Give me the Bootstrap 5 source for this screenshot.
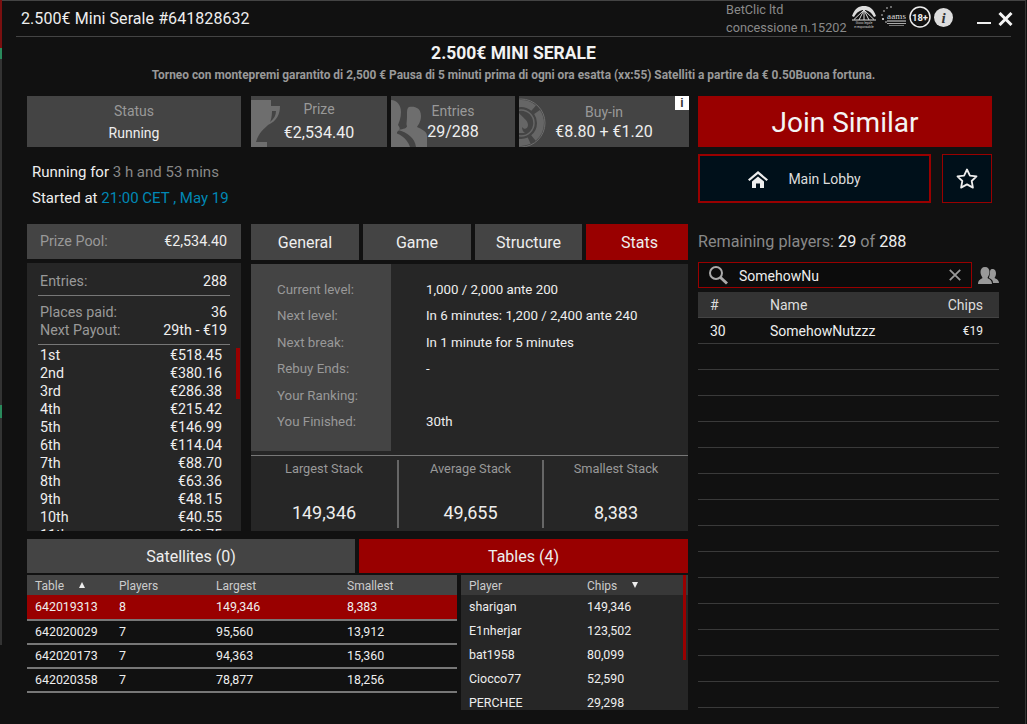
<!DOCTYPE html>
<html lang="en">
<head>
  <meta charset="UTF-8">
  <meta name="viewport" content="width=device-width, initial-scale=1">
  <title>2.500€ Mini Serale</title>
  <link href="https://cdn.jsdelivr.net/npm/bootstrap@5.3.0/dist/css/bootstrap.min.css" rel="stylesheet">
  <style>
    html, body { height: 100%; }
    body {
      background: #111;
      color: #eee;
      font-family: Roboto, "Liberation Sans", sans-serif;
      font-size: 14px;
      overflow: hidden;
    }
    .app-window {
      width: 1024px;
      height: 724px;
      border-top: 1px solid #444;
      border-right: 1px solid #333;
      background: #111;
      overflow: hidden;
    }
    .edge-strip {
      width: 2px;
      height: 724px;
      flex: none;
      background: linear-gradient(#7a1010 0 48px, #2a8a5c 48px 59px, #333 59px 405px, #2a8a5c 405px 418px, #333 418px 645px, #111 645px);
    }
    .win-head {
      height: 36px;
      margin: 0 14px 0 14px;
      border-bottom: 1px solid #444;
      padding-left: 5px;
    }
    .win-title { font-size: 16px; line-height: 36px; color: #eee; letter-spacing: .07px; }
    .lic-text { font-size: 12.7px; line-height: 18px; color: #8a8a8a; width: 125px; }
    .lic-logos { margin-left: 0; width: 104px; gap: 3px; padding-bottom: 3px; }
    .win-btns { margin-left: 22px; width: 37px; gap: 7px; margin-right: -3px; }
    .tourney-head { height: 59px; padding-top: 6px; }
    .tourney-name { font-size: 17.5px; font-weight: 700; line-height: 20px; color: #f2f2f2; }
    .tourney-desc { font-size: 11.9px; font-weight: 700; line-height: 16px; margin-top: 4px; color: #999; }
    .main-area { padding-left: 25px; gap: 9px; }
    .left-area { width: 662px; flex: none; }
    .right-area { width: 301px; flex: none; }

    .info-tile {
      height: 51px;
      background: #444;
      position: relative;
      overflow: hidden;
      text-align: center;
      line-height: 20px;
    }
    .info-tile .tile-lab { color: #999; font-size: 14px; }
    .info-tile .tile-val { color: #eee; font-size: 16px; }
    .tile-status { width: 214px; margin-right: 10px; padding-top: 5px; }
    .tile-status .tile-lab { line-height: 20px; }
    .tile-status .tile-val { font-size: 14px; line-height: 24px; }
    .tile-prize { width: 136px; margin-right: 4px; padding-top: 3px; padding-left: 0; }
    .tile-prize .tile-val, .tile-prize .tile-lab { position: relative; }
    .tile-prize .tile-val { line-height: 28px; }
    .tile-entries { width: 124px; margin-right: 4px; padding-top: 5px; }
    .tile-entries .tile-val { line-height: 22px; position: relative; }
    .tile-buyin { width: 170px; padding-top: 6px; }
    .tile-buyin .tile-val { line-height: 20px; position: relative; }
    .tile-art { position: absolute; left: 0; top: 0; }
    .tile-info {
      position: absolute; right: 0; top: 0;
      width: 14px; height: 14px;
      background: #fff; color: #333;
      font: 700 12px/14px "Liberation Sans", sans-serif;
    }
    .run-info { height: 77px; padding: 12px 0 0 5px; line-height: 26px; font-size: 15px; }
    .run-grey { color: #888; }
    .run-blue { color: #0088b5; }

    .pool-col { width: 214px; margin-right: 10px; flex: none; font-size: 14.3px; }
    .pool-head { height: 35px; background: #444; padding: 0 14px 0 13px; color: #eee; }
    .pool-head span:first-child { color: #999; }
    .pool-body {
      height: 268px; margin-top: 4px;
      background: #262626; position: relative; overflow: hidden;
      padding-top: 9px; line-height: 18px;
    }
    .pool-row { padding: 0 14px 0 13px; }
    .pool-row .pool-lab { color: #999; }
    .pool-rule { height: 1px; background: #777; margin: 5px 11px 7px; }
    .pool-list { margin-top: -6px; }
    .pool-list .pool-row { padding-right: 19px; }
    .pool-thumb { position: absolute; left: 209px; top: 85px; width: 4px; height: 51px; background: #900; }

    .detail-col { width: 437px; flex: none; }
    .tab-row { gap: 4px; }
    .tab-btn {
      height: 36px; line-height: 38px; text-align: center;
      background: #444; color: #eee; font-size: 16px;
      padding: 0; border-radius: 0;
    }
    .tab-btn.nav-link:hover, .tab-btn.nav-link:focus { color: #eee; }
    .tab-on { background: #900; }
    .tab-w1 { width: 108px; }
    .tab-w2 { width: 107px; }
    .tab-w3 { width: 102px; padding-left: 5px; }
    .detail-body { height: 267px; margin-top: 4px; background: #262626; }
    .detail-labs { width: 140px; height: 187px; background: #444; padding: 12px 0 0 26px; color: #999; }
    .detail-vals { padding: 12px 0 0 35px; color: #eee; }
    .detail-labs div, .detail-vals div { height: 26.4px; line-height: 27.4px; font-size: 13.3px; white-space: nowrap; }
    .stack-rule { height: 1px; background: #777; margin-top: 4px; }
    .stack-col { height: 68px; margin-top: 4px; padding-top: 1px; text-align: center; border-right: 2px solid #666; }
    .stack-w1 { width: 148px; }
    .stack-w2 { width: 145px; }
    .stack-w3 { width: 144px; border-right: 0; }
    .stack-lab { color: #999; font-size: 12.8px; line-height: 16px; }
    .stack-val { color: #eee; font-size: 18px; line-height: 24px; margin-top: 24px; }

    .lower-tabs { margin-top: 8px; gap: 4px; }
    .lower-tabs .tab-btn { height: 34px; line-height: 36px; padding: 0; }
    .lower-w1 { width: 328px; }
    .lower-w2 { width: 329px; }
    .lower-tables { margin-top: 2px; gap: 4px; }
    .tables-wrap { width: 430px; flex: none; }
    .players-wrap { width: 227px; height: 135px; flex: none; background: #262626; position: relative; overflow: hidden; }
    .players-thumb { position: absolute; right: 2px; top: 0; width: 3px; height: 85px; background: #900; }

    .tbl-dark {
      --bs-table-bg: transparent;
      --bs-table-color: #eee;
      border-collapse: separate;
      border-spacing: 0;
      table-layout: fixed;
      font-size: 12.4px;
      margin: 0;
      color: #eee;
    }
    .tbl-dark th, .tbl-dark td {
      padding: 1px 0 0 8px;
      border: 0;
      font-weight: 400;
      vertical-align: middle;
      color: inherit;
      background: transparent;
      box-shadow: none;
    }
    .tbl-dark th { height: 20px; background: #444; color: #ccc; font-size: 12px; }
    .tbl-tables td { height: 24px; border-bottom: 2px solid #777; }
    .tbl-tables .row-on td { height: 26px; background: #900; background-clip: padding-box; }
    .tbl-players th { background: #383838; }
    .tbl-players td { height: 24px; }
    .sort-up, .sort-down { display: inline-block; width: 0; height: 0; border-left: 3.5px solid transparent; border-right: 3.5px solid transparent; margin-left: 12px; vertical-align: 2px; }
    .sort-up { border-bottom: 6px solid #eee; }
    .sort-down { border-top: 6px solid #eee; }

    .join-btn {
      display: block; width: 294px; height: 51px;
      background: #900; color: #f4f4f4; border: 0; border-radius: 0;
      font-size: 28px; line-height: 53px; padding: 0;
    }
    .join-btn:hover { background: #900; color: #f4f4f4; }
    .lobby-row { margin-top: 7px; gap: 11px; }
    .lobby-btn, .fav-btn {
      height: 49px; background: #00101a; border-radius: 0; padding: 0;
      color: #ddd; font-size: 14px;
    }
    .lobby-btn { width: 233px; border: 2px solid #900; gap: 20px; padding: 1px 20px 0 0; }
    .fav-btn { width: 50px; border: 1px solid #900; }
    .lobby-btn:hover, .fav-btn:hover { background: #00101a; border-color: #900; color: #ddd; }
    .remain-line { margin-top: 27px; line-height: 24px; font-size: 16.2px; color: #888; }
    .remain-line b { font-weight: 400; color: #eee; }
    .search-row { margin-top: 8px; height: 26px; gap: 6px; }
    .search-box { width: 274px; height: 26px; border: 1px solid #900; padding: 0 10px 0 9px; gap: 11px; background: #0c0c0c; }
    .search-input {
      flex: 1; min-width: 0; height: 22px; border: 0; background: transparent; box-shadow: none;
      padding: 1px 0 0; color: #eee; font-size: 14px; border-radius: 0;
    }
    .search-input:focus { background: transparent; box-shadow: none; color: #eee; }
    .tbl-remain { margin-top: 4px; font-size: 14px; --bs-table-color: #eee; }
    .tbl-dark.tbl-remain th { height: 26px; background: #333; color: #ddd; font-size: 14px; border-bottom: 1px solid #444; padding-left: 12px; }
    .tbl-dark.tbl-remain td { height: 26px; border-bottom: 1px solid #3a3a3a; padding-left: 12px; }
    .tbl-dark.tbl-remain .num-col { text-align: right; padding-right: 16px; padding-left: 0; }
    .tbl-dark.tbl-remain td.num-col { font-size: 12px; }
    .tbl-dark.tbl-remain .name-col { padding-left: 0; }
  </style>
</head>

<body>
  <div class="d-flex">
    <div class="edge-strip"></div>
    <div class="app-window">

      <div class="win-head d-flex justify-content-between">
        <div class="win-title">2.500€ Mini Serale #641828632</div>
        <div class="d-flex">
          <div class="lic-text">BetClic ltd<br>concessione n.15202</div>
          <div class="lic-logos d-flex align-items-center">
            <svg width="26" height="24" viewBox="0 0 26 24">
              <path d="M1 11 C4 3 8 1 13 1 C18 1 22 3 25 11 L23 12 C20 7 17 5 13 5 C9 5 6 7 3 12Z" fill="#ddd"/>
              <path d="M3 14.5 L13 5 L23 14.5 M13 5 V15 M8 15 L13 5 L18 15 M1 15 H25" stroke="#ddd" stroke-width="1" fill="none"/>
              <text x="13" y="19" font-size="3" fill="#ccc" text-anchor="middle">Gioco legale</text>
              <text x="13" y="23" font-size="3" fill="#ccc" text-anchor="middle">e responsabile</text>
            </svg>
            <svg width="26" height="24" viewBox="0 0 26 24">
              <g fill="#ddd"><circle cx="11" cy="2" r=".8"/><circle cx="7" cy="3" r=".8"/><circle cx="4" cy="6" r=".8"/><circle cx="2" cy="10" r=".8"/><circle cx="3" cy="14" r="1.1"/><circle cx="6" cy="17" r=".8"/></g>
              <text x="7" y="14" font-size="9" fill="#ddd" font-family="Liberation Serif, serif" textLength="19">aams</text>
              <rect x="7" y="15.5" width="19" height="1" fill="#ddd"/>
              <rect x="7" y="18" width="19" height="1" fill="#aaa"/>
              <rect x="9" y="20" width="15" height="1" fill="#777"/>
            </svg>
            <svg width="22" height="22" viewBox="0 0 22 22">
              <circle cx="11" cy="11" r="10" fill="none" stroke="#eee" stroke-width="1.5"/>
              <text x="11" y="14.5" font-size="9.5" font-weight="700" fill="#eee" text-anchor="middle">18+</text>
            </svg>
            <svg width="19" height="19" viewBox="0 0 19 19">
              <circle cx="9.5" cy="9.5" r="9.5" fill="#ddd"/>
              <text x="9.5" y="15" font-size="15" font-weight="700" font-style="italic" font-family="Liberation Serif, serif" fill="#333" text-anchor="middle">i</text>
            </svg>
          </div>
          <div class="win-btns d-flex align-items-center">
            <svg width="14" height="14" viewBox="0 0 14 14"><rect y="10" width="14" height="2" fill="#eee"/></svg>
            <svg width="15" height="14" viewBox="0 0 15 14"><path d="M1.5 1 L13.5 13 M13.5 1 L1.5 13" stroke="#f4f4f4" stroke-width="3"/></svg>
          </div>
        </div>
      </div>

      <div class="tourney-head text-center">
        <div class="tourney-name">2.500€ MINI SERALE</div>
        <div class="tourney-desc">Torneo con montepremi garantito di 2,500 € Pausa di 5 minuti prima di ogni ora esatta (xx:55) Satelliti a partire da € 0.50Buona fortuna.</div>
      </div>

      <div class="main-area d-flex">
        <div class="left-area">
          <div class="d-flex">
            <div class="info-tile tile-status">
              <div class="tile-lab">Status</div>
              <div class="tile-val">Running</div>
            </div>
            <div class="info-tile tile-prize">
              <svg class="tile-art" width="30" height="51" viewBox="0 0 30 51">
                <path fill-rule="evenodd" fill="#6e6e6e" d="M0 4 H20 V10 H29 C29 18 26 25 17 29 C13 33 8 36 5 46 H16 V51 H0Z M21 15 C21 20 20 24 19 26 C23 23 25 19 25 15Z"/>
              </svg>
              <div class="tile-lab">Prize</div>
              <div class="tile-val">€2,534.40</div>
            </div>
            <div class="info-tile tile-entries">
              <svg class="tile-art" width="38" height="51" viewBox="0 0 38 51">
                <path fill="#6e6e6e" d="M0 4 C6 4 10 9 10 16 C10 22 8 26 7 29 C9 32 10 33 6 36 L6 51 H0Z"/>
                <path fill="#6e6e6e" d="M18 11 C24 10 30 12 30 20 C30 26 27 29 26 31 C30 33 36 35 36 40 V51 H25 C24 42 16 36 7 34 C13 33 16 32 16 30 C15 28 16 26 16 20 C16 15 16 12 18 11Z"/>
                <path fill="#6e6e6e" d="M0 36 C8 37 16 42 19 51 H0Z"/>
              </svg>
              <div class="tile-lab">Entries</div>
              <div class="tile-val">29/288</div>
            </div>
            <div class="info-tile tile-buyin">
              <svg class="tile-art" width="28" height="51" viewBox="0 0 28 51">
                <circle cx="2" cy="27" r="24" fill="none" stroke="#6e6e6e" stroke-width="1"/>
                <circle cx="2" cy="27" r="19.5" fill="none" stroke="#666" stroke-width="7" stroke-dasharray="17 5"/>
                <circle cx="2" cy="27" r="13" fill="#444" stroke="#666" stroke-width="1.5"/>
                <path fill="#666" d="M0 17 C3 21 9 24 9 29 C9 33 5 34 3 31 C3 33 4 36 6 37 H0Z"/>
              </svg>
              <div class="tile-lab">Buy-in</div>
              <div class="tile-val">€8.80 + €1.20</div>
              <div class="tile-info">i</div>
            </div>
          </div>

          <div class="run-info">
            <div>Running for <span class="run-grey">3 h and 53 mins</span></div>
            <div>Started at <span class="run-blue">21:00 CET , May 19</span></div>
          </div>

          <div class="d-flex">
            <div class="pool-col">
              <div class="pool-head d-flex justify-content-between align-items-center"><span>Prize Pool:</span><span>€2,534.40</span></div>
              <div class="pool-body">
                <div class="pool-row d-flex justify-content-between"><span class="pool-lab">Entries:</span><span>288</span></div>
                <div class="pool-rule"></div>
                <div class="pool-row d-flex justify-content-between"><span class="pool-lab">Places paid:</span><span>36</span></div>
                <div class="pool-row d-flex justify-content-between"><span class="pool-lab">Next Payout:</span><span>29th - €19</span></div>
                <div class="pool-rule"></div>
                <div class="pool-list">
                  <div class="pool-row d-flex justify-content-between"><span>1st</span><span>€518.45</span></div>
                  <div class="pool-row d-flex justify-content-between"><span>2nd</span><span>€380.16</span></div>
                  <div class="pool-row d-flex justify-content-between"><span>3rd</span><span>€286.38</span></div>
                  <div class="pool-row d-flex justify-content-between"><span>4th</span><span>€215.42</span></div>
                  <div class="pool-row d-flex justify-content-between"><span>5th</span><span>€146.99</span></div>
                  <div class="pool-row d-flex justify-content-between"><span>6th</span><span>€114.04</span></div>
                  <div class="pool-row d-flex justify-content-between"><span>7th</span><span>€88.70</span></div>
                  <div class="pool-row d-flex justify-content-between"><span>8th</span><span>€63.36</span></div>
                  <div class="pool-row d-flex justify-content-between"><span>9th</span><span>€48.15</span></div>
                  <div class="pool-row d-flex justify-content-between"><span>10th</span><span>€40.55</span></div>
                  <div class="pool-row d-flex justify-content-between"><span>11th</span><span>€33.75</span></div>
                </div>
                <div class="pool-thumb"></div>
              </div>
            </div>

            <div class="detail-col">
              <nav class="nav tab-row">
                <a class="nav-link tab-btn tab-w1" href="#">General</a>
                <a class="nav-link tab-btn tab-w1" href="#">Game</a>
                <a class="nav-link tab-btn tab-w2" href="#">Structure</a>
                <a class="nav-link tab-btn tab-w3 tab-on" href="#">Stats</a>
              </nav>
              <div class="detail-body">
                <div class="d-flex">
                  <div class="detail-labs">
                    <div>Current level:</div>
                    <div>Next level:</div>
                    <div>Next break:</div>
                    <div>Rebuy Ends:</div>
                    <div>Your Ranking:</div>
                    <div>You Finished:</div>
                  </div>
                  <div class="detail-vals">
                    <div>1,000 / 2,000 ante 200</div>
                    <div>In 6 minutes: 1,200 / 2,400 ante 240</div>
                    <div>In 1 minute for 5 minutes</div>
                    <div>-</div>
                    <div>&nbsp;</div>
                    <div>30th</div>
                  </div>
                </div>
                <div class="stack-rule"></div>
                <div class="d-flex">
                  <div class="stack-col stack-w1"><div class="stack-lab">Largest Stack</div><div class="stack-val">149,346</div></div>
                  <div class="stack-col stack-w2"><div class="stack-lab">Average Stack</div><div class="stack-val">49,655</div></div>
                  <div class="stack-col stack-w3"><div class="stack-lab">Smallest Stack</div><div class="stack-val">8,383</div></div>
                </div>
              </div>
            </div>
          </div>

          <nav class="nav lower-tabs">
            <a class="nav-link tab-btn lower-w1" href="#">Satellites (0)</a>
            <a class="nav-link tab-btn lower-w2 tab-on" href="#">Tables (4)</a>
          </nav>

          <div class="lower-tables d-flex">
            <div class="tables-wrap">
              <table class="table tbl-dark tbl-tables">
                <colgroup><col style="width:84px"><col style="width:97px"><col style="width:131px"><col style="width:118px"></colgroup>
                <thead><tr><th>Table <span class="sort-up"></span></th><th>Players</th><th>Largest</th><th>Smallest</th></tr></thead>
                <tbody>
                  <tr class="row-on"><td>642019313</td><td>8</td><td>149,346</td><td>8,383</td></tr>
                  <tr><td>642020029</td><td>7</td><td>95,560</td><td>13,912</td></tr>
                  <tr><td>642020173</td><td>7</td><td>94,363</td><td>15,360</td></tr>
                  <tr><td>642020358</td><td>7</td><td>78,877</td><td>18,256</td></tr>
                </tbody>
              </table>
            </div>
            <div class="players-wrap">
              <table class="table tbl-dark tbl-players">
                <colgroup><col style="width:118px"><col style="width:109px"></colgroup>
                <thead><tr><th>Player</th><th>Chips <span class="sort-down"></span></th></tr></thead>
                <tbody>
                  <tr><td>sharigan</td><td>149,346</td></tr>
                  <tr><td>E1nherjar</td><td>123,502</td></tr>
                  <tr><td>bat1958</td><td>80,099</td></tr>
                  <tr><td>Ciocco77</td><td>52,590</td></tr>
                  <tr><td>PERCHEE</td><td>29,298</td></tr>
                </tbody>
              </table>
              <div class="players-thumb"></div>
            </div>
          </div>
        </div>

        <div class="right-area">
          <button class="btn join-btn" type="button">Join Similar</button>
          <div class="lobby-row d-flex">
            <button class="btn lobby-btn d-flex align-items-center justify-content-center" type="button">
              <svg width="20" height="17" viewBox="0 0 20 17"><path fill="#eee" d="M10 0 L20 8.5 L18.5 10 L10 3 L1.5 10 L0 8.5Z M4 10.5 L10 5.5 L16 10.5 V17 H12 V12.5 H8 V17 H4Z"/></svg>
              <span>Main Lobby</span>
            </button>
            <button class="btn fav-btn d-flex align-items-center justify-content-center" type="button" aria-label="Favourite">
              <svg width="22" height="21" viewBox="0 0 22 21"><path fill="none" stroke="#eee" stroke-width="1.8" stroke-linejoin="round" d="M11 1.5 L13.9 7.6 L20.5 8.4 L15.7 13 L16.9 19.6 L11 16.4 L5.1 19.6 L6.3 13 L1.5 8.4 L8.1 7.6Z"/></svg>
            </button>
          </div>

          <div class="remain-line">Remaining players: <b>29</b> of <b>288</b></div>

          <div class="search-row d-flex align-items-center">
            <div class="search-box d-flex align-items-center">
              <svg width="20" height="20" viewBox="0 0 20 20"><circle cx="8" cy="8" r="6" fill="none" stroke="#aaa" stroke-width="2"/><path d="M12.5 12.5 L19 18.5" stroke="#aaa" stroke-width="3"/></svg>
              <input class="form-control search-input" type="text" value="SomehowNu" aria-label="Search player">
              <svg width="12" height="12" viewBox="0 0 12 12"><path d="M.8 .8 L11.2 11.2 M11.2 .8 L.8 11.2" stroke="#999" stroke-width="1.8"/></svg>
            </div>
            <svg width="21" height="17" viewBox="0 0 21 17"><path fill="#999" d="M14 2 C17 2 18 4 18 6.5 C18 8.5 17 10 16.5 11 C18 12 21 12.5 21 16 H15 C15 13 13 12 11 11 C11 9 12 8 12 5 C12 3.5 12.5 2 14 2Z"/><path fill="#999" d="M7 0 C10 0 11.5 2 11.5 5 C11.5 8 10 9.5 9.5 11 C11 12 14 13 14 17 H0 C0 13 3 12 4.5 11 C4 9.5 2.5 8 2.5 5 C2.5 2 4 0 7 0Z"/></svg>
          </div>

          <table class="table tbl-dark tbl-remain">
            <colgroup><col style="width:72px"><col style="width:148px"><col style="width:81px"></colgroup>
            <thead><tr><th>#</th><th class="name-col">Name</th><th class="num-col">Chips</th></tr></thead>
            <tbody>
              <tr><td>30</td><td class="name-col">SomehowNutzzz</td><td class="num-col">€19</td></tr>
              <tr><td colspan="3"></td></tr>
              <tr><td colspan="3"></td></tr>
              <tr><td colspan="3"></td></tr>
              <tr><td colspan="3"></td></tr>
              <tr><td colspan="3"></td></tr>
              <tr><td colspan="3"></td></tr>
              <tr><td colspan="3"></td></tr>
              <tr><td colspan="3"></td></tr>
              <tr><td colspan="3"></td></tr>
              <tr><td colspan="3"></td></tr>
              <tr><td colspan="3"></td></tr>
              <tr><td colspan="3"></td></tr>
              <tr><td colspan="3"></td></tr>
              <tr><td colspan="3"></td></tr>
            </tbody>
          </table>
        </div>
      </div>
    </div>
  </div>

  <script src="https://cdn.jsdelivr.net/npm/bootstrap@5.3.0/dist/js/bootstrap.bundle.min.js"></script>
</body>
</html>
